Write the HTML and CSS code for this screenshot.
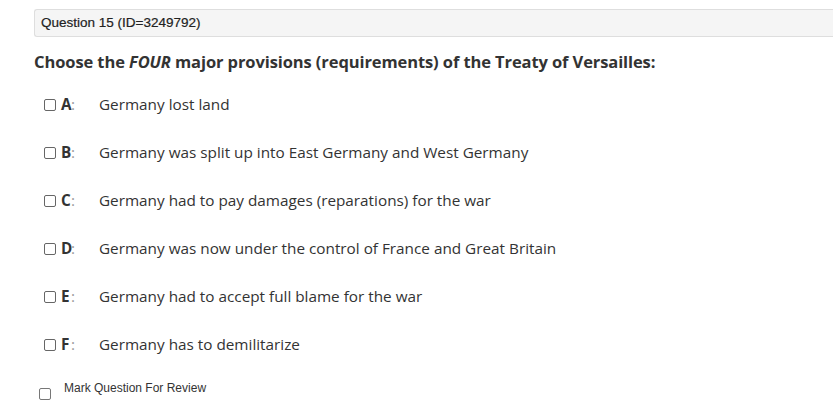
FILE: index.html
```html
<!DOCTYPE html>
<html>
<head>
<meta charset="utf-8">
<link rel="stylesheet" href="styles.css">
</head>
<body>
<div class="page">
  <div class="qhead">Question 15 (ID=3249792)</div>
  <h2 class="prompt">Choose the <em>FOUR</em> major provisions (requirements) of the Treaty of Versailles:</h2>
  <ul class="options">
    <li class="opt"><span class="box"></span><b class="letter">A</b><span class="colon">:</span><span class="text">Germany lost land</span></li>
    <li class="opt"><span class="box"></span><b class="letter">B</b><span class="colon">:</span><span class="text">Germany was split up into East Germany and West Germany</span></li>
    <li class="opt"><span class="box"></span><b class="letter">C</b><span class="colon">:</span><span class="text">Germany had to pay damages (reparations) for the war</span></li>
    <li class="opt"><span class="box"></span><b class="letter">D</b><span class="colon">:</span><span class="text">Germany was now under the control of France and Great Britain</span></li>
    <li class="opt"><span class="box"></span><b class="letter">E</b><span class="colon">:</span><span class="text">Germany had to accept full blame for the war</span></li>
    <li class="opt"><span class="box"></span><b class="letter">F</b><span class="colon">:</span><span class="text">Germany has to demilitarize</span></li>
  </ul>
  <div class="review"><span class="rbox"></span><span class="rtext">Mark Question For Review</span></div>
</div>
</body>
</html>
```
FILE: styles.css
```css
html, body { margin: 0; padding: 0; background: #fff; }
.page { padding: 9px 0 0 34px; }
.qhead {
  height: 28px;
  box-sizing: border-box;
  background: #f5f5f5;
  border: 1px solid #dedede;
  border-right: none;
  border-radius: 3px 0 0 3px;
  font-family: "Liberation Sans", Arial, sans-serif;
  font-size: 13.5px;
  color: #222;
  line-height: 26px;
  padding-left: 6px;
  -webkit-text-stroke: 0.2px #222;
}
.prompt {
  margin: 13px 0 0 0;
  font-family: "Open Sans", sans-serif;
  font-weight: 700;
  font-size: 16.5px;
  line-height: 24px;
  color: #333;
  letter-spacing: -0.1px;
}
.prompt em { font-style: italic; }
.options { list-style: none; margin: 15px 0 0 0; padding: 0; }
.opt {
  height: 48px;
  display: flex;
  align-items: flex-start;
  padding-top: 6px;
  box-sizing: border-box;
  font-family: "Open Sans", sans-serif;
  font-size: 15.3px;
  color: #333;
  line-height: 18px;
}
.box {
  width: 10px; height: 10px;
  border: 1px solid #666;
  border-radius: 2px;
  margin: 4px 5px 0 10px;
  flex: none;
}
.letter { font-weight: 700; color: #333; width: 10px; }
.colon { color: #999; width: 28px; }
.text { color: #333; }
.review {
  display: flex;
  align-items: flex-start;
  margin-top: 4px;
  font-family: "Liberation Sans", Arial, sans-serif;
  font-size: 12px;
  color: #333;
}
.rbox {
  width: 10px; height: 10px;
  border: 1px solid #777;
  border-radius: 2px;
  margin: 7px 0 0 5px;
  flex: none;
}
.rtext { margin-left: 13px; line-height: 14px; }
```
